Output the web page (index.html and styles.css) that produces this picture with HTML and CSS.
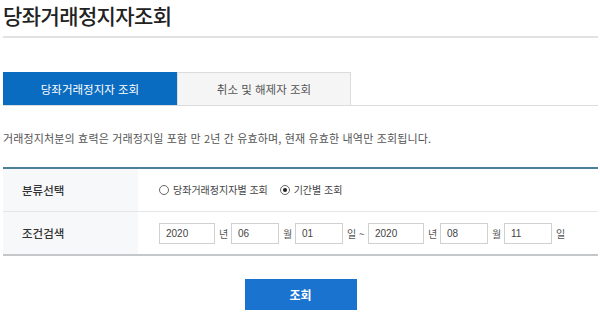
FILE: index.html
```html
<!DOCTYPE html>
<html lang="ko">
<head>
    <meta charset="UTF-8">
    <title>당좌거래정지자조회</title>
    <link rel="stylesheet" href="styles.css">
</head>
<body>
    <div class="page">
        <h1 class="page-title">당좌거래정지자조회</h1>

        <ul class="tabs">
            <li class="tab active">당좌거래정지자 조회</li>
            <li class="tab">취소 및 해제자 조회</li>
        </ul>

        <p class="notice">거래정지처분의 효력은 거래정지일 포함 만 2년 간 유효하며, 현재 유효한 내역만 조회됩니다.</p>

        <table class="search-table">
            <colgroup>
                <col class="col-label">
                <col>
            </colgroup>
            <tr>
                <th>분류선택</th>
                <td>
                    <label class="radio"><span class="radio-dot"></span>당좌거래정지자별 조회</label>
                    <label class="radio"><span class="radio-dot checked"></span>기간별 조회</label>
                </td>
            </tr>
            <tr>
                <th>조건검색</th>
                <td>
                    <div class="date-row">
                        <input class="field year" type="text" value="2020"><span class="unit">년</span>
                        <input class="field" type="text" value="06"><span class="unit">월</span>
                        <input class="field" type="text" value="01"><span class="unit tilde">일 ~</span>
                        <input class="field year" type="text" value="2020"><span class="unit">년</span>
                        <input class="field" type="text" value="08"><span class="unit">월</span>
                        <input class="field" type="text" value="11"><span class="unit">일</span>
                    </div>
                </td>
            </tr>
        </table>

        <div class="actions">
            <button class="btn-search" type="button">조회</button>
        </div>
    </div>
</body>
</html>
```

FILE: styles.css
```css
body {
    margin: 0;
    background: #fff;
    font-family: "Noto Sans CJK KR", "Noto Sans", sans-serif;
    color: #333;
}
.page {
    width: 595px;
    padding: 0 2px 0 3px;
}
.page-title {
    margin: 0;
    height: 36px;
    font-size: 21px;
    font-weight: 500;
    color: #222;
    line-height: 31px;
    letter-spacing: -0.6px;
    border-bottom: 2px solid #e2e2e2;
}
.tabs {
    list-style: none;
    margin: 34px 0 0;
    padding: 0;
    display: flex;
    border-bottom: 1px solid #dcdcdc;
}
.tab {
    width: 172px;
    height: 32px;
    line-height: 32px;
    text-align: center;
    font-size: 11.5px;
    color: #555;
    background: #f5f5f5;
    border: 1px solid #dcdcdc;
    border-bottom: none;
    box-sizing: content-box;
}
.tab.active {
    background: #0a6cc0;
    border-color: #0a6cc0;
    color: #fff;
}
.notice {
    margin: 24px 0 0;
    font-size: 11px;
    letter-spacing: 0.15px;
    color: #555;
    line-height: 16px;
}
.search-table {
    margin-top: 21px;
    width: 100%;
    table-layout: fixed;
    border-collapse: collapse;
    border-top: 2px solid #4c7f98;
    border-bottom: 2px solid #c4c8cb;
}
.col-label {
    width: 135px;
}
.search-table th {
    padding-left: 19px;
    text-align: left;
    font-size: 11.5px;
    font-weight: 500;
    color: #333;
    background: #f7f8fa;
}
.search-table td {
    padding-left: 21px;
    font-size: 10px;
    color: #444;
}
.search-table tr:first-child th,
.search-table tr:first-child td {
    height: 40px;
    border-bottom: 1px solid #e4e6e8;
}
.search-table tr:last-child th,
.search-table tr:last-child td {
    height: 40px;
}
.radio {
    display: inline-flex;
    align-items: center;
    margin-right: 9px;
}
.radio-dot {
    width: 8px;
    height: 8px;
    border: 1px solid #666;
    border-radius: 50%;
    margin-right: 4px;
    position: relative;
}
.radio-dot.checked::after {
    content: "";
    position: absolute;
    left: 2px;
    top: 2px;
    width: 4px;
    height: 4px;
    border-radius: 50%;
    background: #222;
}
.date-row {
    display: flex;
    align-items: center;
}
.field {
    width: 40px;
    height: 19px;
    padding: 0 0 0 6px;
    margin: 0;
    border: 1px solid #d0d0d0;
    font-family: "Liberation Sans", sans-serif;
    font-size: 10px;
    color: #444;
    background: #fff;
    box-sizing: content-box;
}
.field.year {
    width: 48px;
}
.unit {
    width: 12px;
    padding-left: 4px;
    color: #555;
}
.unit.tilde {
    width: 21px;
}
.actions {
    display: flex;
    justify-content: center;
    margin-top: 23px;
}
.btn-search {
    width: 112px;
    height: 31px;
    border: none;
    background: #1a74cf;
    color: #fff;
    font-family: "Noto Sans CJK KR", sans-serif;
    font-size: 12px;
    font-weight: 700;
}
```
